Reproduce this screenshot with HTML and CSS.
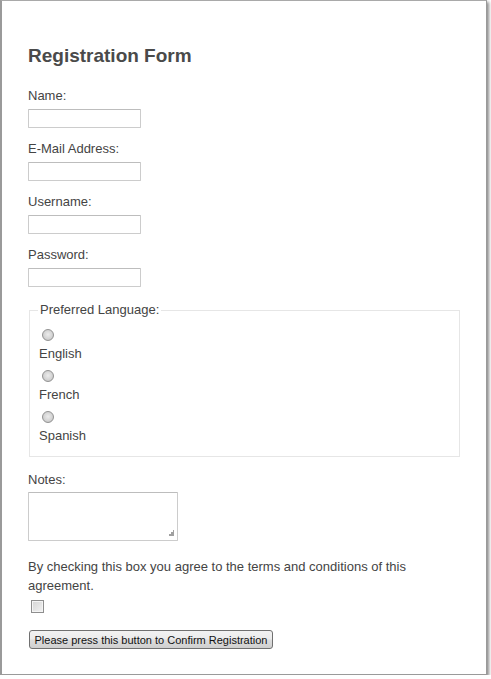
FILE: index.html
```html
<!DOCTYPE html>
<html>
<head>
<meta charset="utf-8">
<title>Registration Form</title>
<link rel="stylesheet" href="styles.css">
</head>
<body>
<div class="frame">
  <form class="form">
    <h1 class="title">Registration Form</h1>

    <div class="field">
      <label class="label" for="name">Name:</label>
      <input class="text" id="name" type="text">
    </div>
    <div class="field">
      <label class="label" for="email">E-Mail Address:</label>
      <input class="text" id="email" type="text">
    </div>
    <div class="field">
      <label class="label" for="user">Username:</label>
      <input class="text" id="user" type="text">
    </div>
    <div class="field">
      <label class="label" for="pass">Password:</label>
      <input class="text" id="pass" type="password">
    </div>

    <fieldset class="langs">
      <legend class="legend">Preferred Language:</legend>
      <div class="option">
        <input class="radio" id="en" type="radio" name="lang">
        <label class="opt-label" for="en">English</label>
      </div>
      <div class="option">
        <input class="radio" id="fr" type="radio" name="lang">
        <label class="opt-label" for="fr">French</label>
      </div>
      <div class="option">
        <input class="radio" id="es" type="radio" name="lang">
        <label class="opt-label" for="es">Spanish</label>
      </div>
    </fieldset>

    <div class="notes">
      <label class="label" for="notes">Notes:</label>
      <span class="area-wrap"><textarea class="area" id="notes"></textarea></span>
    </div>

    <p class="agree">By checking this box you agree to the terms and conditions of this agreement.</p>
    <input class="check" type="checkbox">

    <button class="submit" type="button">Please press this button to Confirm Registration</button>
  </form>
</div>
</body>
</html>
```

FILE: styles.css
```css
html, body {
  margin: 0;
  padding: 0;
  background: #ffffff;
}

.frame {
  box-sizing: border-box;
  width: 487px;
  height: 675px;
  border-top: 1px solid #a9a9a9;
  border-left: 2px solid #9a9a9a;
  border-right: 1px solid #9a9a9a;
  border-bottom: 1px solid #9a9a9a;
  box-shadow: 2px 2px 3px rgba(0, 0, 0, 0.45);
  background: #ffffff;
}

.form {
  padding: 44px 26px 0 26px;
  font-family: "Liberation Sans", Arial, sans-serif;
  font-size: 13px;
  color: #444444;
}

.title {
  margin: 0 0 21px 0;
  font-size: 19px;
  line-height: 22px;
  font-weight: bold;
  color: #4a4a4a;
}

.field {
  margin-bottom: 13px;
}

.label {
  display: block;
  line-height: 16px;
}

.text {
  display: block;
  box-sizing: border-box;
  width: 113px;
  height: 19px;
  margin: 5px 0 0 0;
  padding: 0 3px;
  border: 1px solid #cccccc;
  border-top-color: #bdbdbd;
  border-radius: 1px;
  background: #ffffff;
  font: 13px "Liberation Sans", Arial, sans-serif;
}

.langs {
  margin: 15px 0 0 1px;
  padding: 11px 8px 12px 9px;
  border: 1px solid #e6e6e6;
  min-width: 0;
}

.legend {
  padding: 0 2px;
  margin-left: -1px;
  line-height: 16px;
}

.option {
  margin-bottom: 8px;
}

.option:last-child {
  margin-bottom: 0;
}

.radio {
  appearance: none;
  -webkit-appearance: none;
  display: block;
  box-sizing: border-box;
  width: 12px;
  height: 12px;
  margin: 0 0 0 3px;
  border: 1px solid #929292;
  border-radius: 50%;
  background: radial-gradient(circle at 50% 45%, #ececec 0%, #d2d2d2 60%, #b8b8b8 100%);
}

.opt-label {
  display: block;
  margin-top: 5px;
  line-height: 16px;
}

.notes {
  margin-top: 15px;
}

.area-wrap {
  position: relative;
  display: block;
  width: 150px;
  height: 49px;
  margin-top: 4px;
}

.area {
  display: block;
  box-sizing: border-box;
  width: 150px;
  height: 49px;
  margin: 0;
  padding: 2px;
  border: 1px solid #cccccc;
  border-top-color: #bdbdbd;
  border-radius: 1px;
  resize: none;
  font: 13px "Liberation Sans", Arial, sans-serif;
}

.area-wrap::after {
  content: "";
  position: absolute;
  right: 4px;
  bottom: 4px;
  width: 7px;
  height: 7px;
  background:
    radial-gradient(circle, #a0a0a0 0.8px, transparent 1px) 6px 0 / 2px 2px no-repeat,
    radial-gradient(circle, #a0a0a0 0.8px, transparent 1px) 4px 2px / 2px 2px no-repeat,
    radial-gradient(circle, #a0a0a0 0.8px, transparent 1px) 6px 2px / 2px 2px no-repeat,
    radial-gradient(circle, #a0a0a0 0.8px, transparent 1px) 2px 4px / 2px 2px no-repeat,
    radial-gradient(circle, #a0a0a0 0.8px, transparent 1px) 4px 4px / 2px 2px no-repeat,
    radial-gradient(circle, #a0a0a0 0.8px, transparent 1px) 6px 4px / 2px 2px no-repeat;
}

.agree {
  margin: 16px 0 0 0;
  line-height: 19px;
}

.check {
  appearance: none;
  -webkit-appearance: none;
  display: block;
  box-sizing: border-box;
  width: 13px;
  height: 13px;
  margin: 5px 0 0 3px;
  border: 1px solid #8e8e8e;
  border-radius: 0;
  background: linear-gradient(135deg, #d4d4d4 0%, #f2f2f2 100%);
  box-shadow: inset 0 0 0 1px #f4f4f4;
}

.submit {
  display: block;
  box-sizing: border-box;
  width: 244px;
  height: 19px;
  margin: 17px 0 0 1px;
  padding: 0 4px;
  border: 1px solid #707070;
  border-radius: 3px;
  background: linear-gradient(to bottom, #f2f2f2 0%, #ebebeb 48%, #dddddd 52%, #cfcfcf 100%);
  font: 11px "Liberation Sans", Arial, sans-serif;
  color: #111111;
  line-height: 16px;
  white-space: nowrap;
}
```
